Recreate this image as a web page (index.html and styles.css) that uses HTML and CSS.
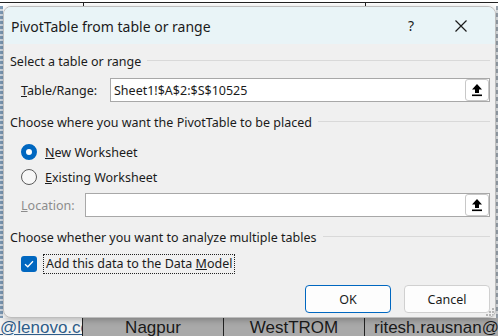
FILE: index.html
```html
<!DOCTYPE html>
<html lang="en">
<head>
  <meta charset="UTF-8">
  <title>PivotTable from table or range</title>
  <link rel="stylesheet" href="styles.css">
</head>
<body>
  <!-- Worksheet behind the dialog -->
  <div class="sheet-top">
    <div class="cell-top c1"></div>
    <div class="cell-top c2"></div>
    <div class="cell-top c3"></div>
  </div>

  <div class="middle">
    <div class="edge-left"></div>

    <!-- Dialog -->
    <div class="dialog">
      <div class="titlebar">
        <span class="title">PivotTable from table or range</span>
        <span class="help">?</span>
        <span class="close">
          <svg width="14" height="14" viewBox="0 0 14 14"><path d="M1.5 1.5 L12.5 12.5 M12.5 1.5 L1.5 12.5" stroke="#1b1b1b" stroke-width="1.2" fill="none"/></svg>
        </span>
      </div>

      <div class="dialog-body">
        <div class="group-head sec1">Select a table or range</div>
        <div class="field-row range-row">
          <label class="field-label"><u>T</u>able/Range:</label>
          <div class="ref-input">
            <span class="ref-text">Sheet1!$A$2:$S$10525</span>
            <span class="ref-btn">
              <svg width="12" height="14" viewBox="0 0 12 14"><polygon points="6,1 11,6.5 8,6.5 8,10 4,10 4,6.5 1,6.5" fill="#000"/><rect x="1" y="11.5" width="10" height="1.6" fill="#000"/></svg>
            </span>
          </div>
        </div>

        <div class="group-head sec2">Choose where you want the PivotTable to be placed</div>
        <div class="option-row opt1">
          <span class="radio checked"></span>
          <span><u>N</u>ew Worksheet</span>
        </div>
        <div class="option-row opt2">
          <span class="radio"></span>
          <span><u>E</u>xisting Worksheet</span>
        </div>
        <div class="field-row loc-row">
          <label class="field-label disabled"><u>L</u>ocation:</label>
          <div class="ref-input">
            <span class="ref-text"></span>
            <span class="ref-btn">
              <svg width="12" height="14" viewBox="0 0 12 14"><polygon points="6,1 11,6.5 8,6.5 8,10 4,10 4,6.5 1,6.5" fill="#000"/><rect x="1" y="11.5" width="10" height="1.6" fill="#000"/></svg>
            </span>
          </div>
        </div>

        <div class="group-head sec3">Choose whether you want to analyze multiple tables</div>
        <div class="option-row check-row">
          <span class="checkbox">
            <svg width="10" height="8" viewBox="0 0 10 8"><path d="M1 4.2 L3.8 6.8 L9 1.2" stroke="#fff" stroke-width="1.3" fill="none"/></svg>
          </span>
          <span class="focus-label">Add this data to the Data <u>M</u>odel</span>
        </div>

        <div class="buttons">
          <button class="btn btn-default">OK</button>
          <button class="btn">Cancel</button>
        </div>
      </div>
      <svg class="grip" width="10" height="10" viewBox="0 0 10 10" fill="#b5b5b5">
        <rect x="7" y="1" width="2" height="2"/>
        <rect x="4" y="4" width="2" height="2"/><rect x="7" y="4" width="2" height="2"/>
        <rect x="1" y="7" width="2" height="2"/><rect x="4" y="7" width="2" height="2"/><rect x="7" y="7" width="2" height="2"/>
      </svg>
    </div>

    <div class="edge-right"></div>
  </div>

  <div class="sheet-bottom">
    <div class="cell link">@lenovo.con</div>
    <div class="cell dim">Nagpur</div>
    <div class="cell dim">WestTROM</div>
    <div class="cell dim left">ritesh.rausnan@v</div>
  </div>
</body>
</html>
```

FILE: styles.css
```css
body {
  margin: 0;
  width: 498px;
  height: 336px;
  overflow: hidden;
  background-color: #fff;
  font-family: "Noto Sans", "Open Sans", sans-serif;
  font-size: 12.5px;
  color: #1b1b1b;
}

/* Worksheet pieces */
.sheet-top {
  display: flex;
  height: 6px;
  box-sizing: border-box;
  border-top: 2px solid #fff;
}
.cell-top {
  border-top: 1px solid #222;
}
.c1 {
  width: 83px;
  border-right: 1px solid #222;
}
.c2 {
  width: 281px;
  border-right: 1px solid #222;
}
.c3 {
  flex: 1;
}
.middle {
  display: flex;
  height: 312px;
}
.edge-left {
  width: 3px;
  background: repeating-linear-gradient(180deg, #7f9cb8 0, #7f9cb8 3px, #d5dde6 3px, #d5dde6 5px);
}
.edge-right {
  width: 2px;
  background: repeating-linear-gradient(180deg, #9aa4ae 0, #9aa4ae 4px, #e0e3e6 4px, #e0e3e6 7px);
}
.sheet-bottom {
  display: flex;
  height: 18px;
  overflow: hidden;
  font-family: "Liberation Sans", Arial, sans-serif;
  font-size: 17px;
  line-height: 20px;
}
.cell {
  box-sizing: border-box;
  text-align: center;
  white-space: nowrap;
  overflow: hidden;
}
.link {
  width: 83px;
  color: #2f5d8a;
  text-decoration: underline;
  background-color: #f2f2f2;
  text-align: right;
  border-right: 1px solid #222;
}
.dim {
  background-color: #a9a9a9;
  color: #1a1a1a;
  width: 141px;
  border-right: 1px solid #222;
}
.dim.left {
  flex: 1;
  border-right: none;
  text-align: left;
  padding-left: 9px;
}

/* Dialog */
.dialog {
  position: relative;
  flex: 1;
  display: flex;
  flex-direction: column;
  background-color: #f0f0f0;
  border: 1px solid #bdbdbd;
  border-radius: 8px;
  overflow: hidden;
  box-shadow: 0 2px 6px rgba(0, 0, 0, 0.25);
}
.titlebar {
  display: flex;
  align-items: center;
  height: 37px;
  background-color: #e9f4f7;
  padding-left: 7px;
}
.title {
  font-size: 14px;
  flex: 1;
  padding-top: 1px;
}
.help {
  font-size: 14px;
  width: 14px;
  text-align: center;
  margin-right: 36px;
}
.close {
  display: flex;
  margin-right: 27px;
}
.dialog-body {
  flex: 1;
  padding: 7px 5px 0 6px;
}
.group-head {
  display: flex;
  align-items: center;
  height: 20px;
}
.group-head::after {
  content: "";
  flex: 1;
  height: 1px;
  background-color: #d9d9d9;
  margin-left: 6px;
  margin-top: -2px;
}
.sec2,
.sec3 {
  margin-top: 10px;
}
.field-row {
  display: flex;
  align-items: center;
  height: 24px;
  margin-top: 7px;
}
.field-label {
  padding-left: 11px;
}
.range-row .field-label {
  width: 89px;
}
.loc-row {
  margin-top: 6px;
}
.loc-row .field-label {
  width: 64px;
}
.disabled {
  color: #8c8c8c;
}
.ref-input {
  flex: 1;
  display: flex;
  align-items: center;
  height: 24px;
  box-sizing: border-box;
  background-color: #fff;
  border: 1px solid #a8a8a8;
}
.ref-text {
  flex: 1;
  padding-left: 3px;
  font-size: 12.5px;
}
.ref-btn {
  display: flex;
  align-items: center;
  justify-content: center;
  width: 24px;
  height: 22px;
  box-sizing: border-box;
  background-color: #fff;
  border: 1px solid #c8c8c8;
  border-radius: 3px;
}
.option-row {
  display: flex;
  align-items: center;
  height: 20px;
  padding-left: 11px;
}
.opt1 {
  margin-top: 10px;
}
.opt2 {
  margin-top: 5px;
}
.radio {
  width: 16px;
  height: 16px;
  box-sizing: border-box;
  border: 1px solid #5a5a5a;
  border-radius: 50%;
  background-color: #f7f7f7;
  margin-right: 8px;
}
.radio.checked {
  border: 5px solid #0067c0;
  background-color: #fff;
}
.check-row {
  margin-top: 7px;
}
.checkbox {
  display: flex;
  align-items: center;
  justify-content: center;
  width: 16px;
  height: 16px;
  border-radius: 3px;
  background-color: #0067c0;
  margin-right: 6px;
}
.focus-label {
  padding: 0 2px;
  border: 1px dotted #222;
  line-height: 18px;
}
.buttons {
  display: flex;
  justify-content: flex-end;
  gap: 13px;
  margin-top: 11px;
}
.btn {
  width: 86px;
  height: 28px;
  font-family: inherit;
  font-size: 12.5px;
  color: #1b1b1b;
  background-color: #fdfdfd;
  border: 1px solid #d0d0d0;
  border-radius: 4px;
}
.btn-default {
  border-color: #0067c0;
}
.grip {
  position: absolute;
  right: 0;
  bottom: 0;
}
```
